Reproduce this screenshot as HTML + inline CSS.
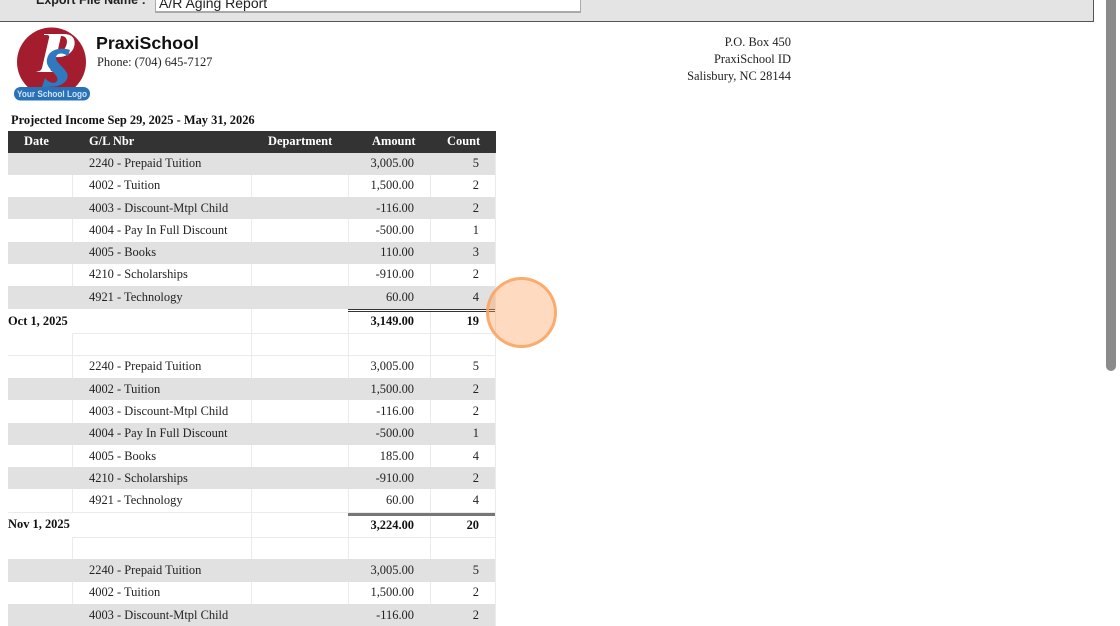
<!DOCTYPE html>
<html><head><meta charset="utf-8">
<style>
html,body{margin:0;padding:0;width:1120px;height:626px;overflow:hidden;background:#fff}
body{position:relative;font-family:"Liberation Serif",serif;font-size:12.45px;color:#222}
div{position:absolute;box-sizing:border-box}
.t{white-space:nowrap;line-height:16px;height:16px}
.g{background:#e1e1e1;left:8px;width:487px}
.v{background:#ebebeb;width:1px}
.h{background:#ebebeb;height:1px}
.r{text-align:right}
.b{font-weight:bold;color:#111}
.c1{left:89px}
.c2{left:300px;width:114px;text-align:right}
.c3{left:430px;width:49px;text-align:right}
</style></head><body>
<!-- top panel -->
<div style="left:-2px;top:-10px;width:1096px;height:32px;background:#e4e4e4;border:1px solid #555"></div>
<div style="left:155px;top:-10px;width:426px;height:23px;background:#fff;border:1px solid #aaa;border-bottom-width:2px"></div>
<div class="t" style="left:36px;top:-8px;font:bold 12.5px/16px 'Liberation Sans',sans-serif;color:#222">Export File Name :</div>
<div class="t" style="left:159px;top:-5px;font:14px/16px 'Liberation Sans',sans-serif;color:#222">A/R Aging Report</div>
<!-- scrollbar -->
<div style="left:1106px;top:-10px;width:10px;height:381px;background:#8a8a8a;border-radius:5px"></div>
<!-- logo -->
<svg style="position:absolute;left:12px;top:26px" width="82" height="76" viewBox="0 0 82 76">
<circle cx="39.500" cy="36" r="34.500" fill="#a31d2e"/>
<path d="M32 8H52C62 8 64 15 62 21C60 28 51 32 44 31L39 42C38 45 39 45 42 46H24C27 45 29 45 30 42L37 12C38 9 36 9 32 9Z" fill="#fff"/>
<path d="M49 10C55 10 56 15 54 20C52 25 49 28 45 28Z" fill="#a31d2e"/>
<path d="M58 24L56 30C50 26 45 27 44 31C43 36 52 41 55 47C58 54 50 60 42 60.500C37 61 33 61 30 61L33 52C36 56 41 58 44 56C47 54 45 50 41 46C36 41 33 37 36 30C39 23 50 21 58 24Z" fill="#2f79bf"/>
<rect x="2" y="61" width="76" height="13.500" rx="6.500" fill="#2a72b8"/>
<text x="40" y="71" text-anchor="middle" textLength="70" lengthAdjust="spacingAndGlyphs" font-family="Liberation Sans,sans-serif" font-weight="bold" font-size="9" fill="#cfe2f7">Your School Logo</text>
</svg>
<div class="t" style="left:96px;top:34px;font:bold 17.800px/18px 'Liberation Sans',sans-serif;color:#111;height:18px">PraxiSchool</div>
<div class="t" style="left:97px;top:54px">Phone: (704) 645-7127</div>
<div class="t r" style="left:591px;width:200px;top:34px">P.O. Box 450</div>
<div class="t r" style="left:591px;width:200px;top:51px">PraxiSchool ID</div>
<div class="t r" style="left:591px;width:200px;top:68px">Salisbury, NC 28144</div>
<div class="t b" style="left:11px;top:112px">Projected Income Sep 29, 2025 - May 31, 2026</div>
<!-- grid lines -->
<div class="v" style="left:72px;top:153px;height:156px"></div>
<div class="v" style="left:251px;top:153px;height:473px"></div>
<div class="v" style="left:348px;top:153px;height:473px"></div>
<div class="v" style="left:430px;top:153px;height:473px"></div>
<div class="v" style="left:495px;top:153px;height:473px"></div>
<div class="v" style="left:72px;top:333px;height:179px"></div>
<div class="v" style="left:72px;top:537px;height:89px"></div>
<div class="h" style="left:72px;top:333px;width:423px"></div>
<div class="h" style="left:8px;top:355px;width:487px"></div>
<div class="h" style="left:8px;top:512px;width:487px"></div>
<div class="h" style="left:72px;top:537px;width:423px"></div>
<!-- gray rows -->
<div class="g" style="top:153px;height:22px"></div>
<div class="g" style="top:197px;height:22px"></div>
<div class="g" style="top:241.500px;height:22px"></div>
<div class="g" style="top:286px;height:22.500px"></div>
<div class="g" style="top:378px;height:22px"></div>
<div class="g" style="top:422.500px;height:22px"></div>
<div class="g" style="top:467px;height:22px"></div>
<div class="g" style="top:559px;height:22.500px"></div>
<div class="g" style="top:604px;height:22px"></div>
<!-- header -->
<div style="left:8px;top:131px;width:487.500px;height:22px;background:#333"></div>
<div class="t b" style="left:24px;top:132.500px;color:#fff">Date</div>
<div class="t b" style="left:89px;top:132.500px;color:#fff">G/L Nbr</div>
<div class="t b" style="left:268px;top:132.500px;color:#fff">Department</div>
<div class="t b" style="left:372px;top:132.500px;color:#fff">Amount</div>
<div class="t b" style="left:447px;top:132.500px;color:#fff">Count</div>
<!-- double lines -->
<div style="left:348px;top:309px;width:147px;height:3px;border-top:1px solid #333;border-bottom:1px solid #333"></div>
<div style="left:348px;top:513px;width:147px;height:3px;background:#777"></div>
<!-- block 1 -->
<div class="t c1" style="top:155px">2240 - Prepaid Tuition</div><div class="t c2" style="top:155px">3,005.00</div><div class="t c3" style="top:155px">5</div>
<div class="t c1" style="top:177px">4002 - Tuition</div><div class="t c2" style="top:177px">1,500.00</div><div class="t c3" style="top:177px">2</div>
<div class="t c1" style="top:199.500px">4003 - Discount-Mtpl Child</div><div class="t c2" style="top:199.500px">-116.00</div><div class="t c3" style="top:199.500px">2</div>
<div class="t c1" style="top:221.500px">4004 - Pay In Full Discount</div><div class="t c2" style="top:221.500px">-500.00</div><div class="t c3" style="top:221.500px">1</div>
<div class="t c1" style="top:244px">4005 - Books</div><div class="t c2" style="top:244px">110.00</div><div class="t c3" style="top:244px">3</div>
<div class="t c1" style="top:266px">4210 - Scholarships</div><div class="t c2" style="top:266px">-910.00</div><div class="t c3" style="top:266px">2</div>
<div class="t c1" style="top:288.500px">4921 - Technology</div><div class="t c2" style="top:288.500px">60.00</div><div class="t c3" style="top:288.500px">4</div>
<div class="t b" style="left:8px;top:313px">Oct 1, 2025</div><div class="t c2 b" style="top:313px">3,149.00</div><div class="t c3 b" style="top:313px">19</div>
<!-- block 2 -->
<div class="t c1" style="top:358px">2240 - Prepaid Tuition</div><div class="t c2" style="top:358px">3,005.00</div><div class="t c3" style="top:358px">5</div>
<div class="t c1" style="top:380.500px">4002 - Tuition</div><div class="t c2" style="top:380.500px">1,500.00</div><div class="t c3" style="top:380.500px">2</div>
<div class="t c1" style="top:403px">4003 - Discount-Mtpl Child</div><div class="t c2" style="top:403px">-116.00</div><div class="t c3" style="top:403px">2</div>
<div class="t c1" style="top:425px">4004 - Pay In Full Discount</div><div class="t c2" style="top:425px">-500.00</div><div class="t c3" style="top:425px">1</div>
<div class="t c1" style="top:447.500px">4005 - Books</div><div class="t c2" style="top:447.500px">185.00</div><div class="t c3" style="top:447.500px">4</div>
<div class="t c1" style="top:470px">4210 - Scholarships</div><div class="t c2" style="top:470px">-910.00</div><div class="t c3" style="top:470px">2</div>
<div class="t c1" style="top:492px">4921 - Technology</div><div class="t c2" style="top:492px">60.00</div><div class="t c3" style="top:492px">4</div>
<div class="t b" style="left:8px;top:516px">Nov 1, 2025</div><div class="t c2 b" style="top:517px">3,224.00</div><div class="t c3 b" style="top:517px">20</div>
<!-- block 3 -->
<div class="t c1" style="top:562px">2240 - Prepaid Tuition</div><div class="t c2" style="top:562px">3,005.00</div><div class="t c3" style="top:562px">5</div>
<div class="t c1" style="top:584px">4002 - Tuition</div><div class="t c2" style="top:584px">1,500.00</div><div class="t c3" style="top:584px">2</div>
<div class="t c1" style="top:607px">4003 - Discount-Mtpl Child</div><div class="t c2" style="top:607px">-116.00</div><div class="t c3" style="top:607px">2</div>
<!-- click highlight -->
<div style="left:486px;top:277px;width:71px;height:71px;border-radius:50%;background:rgba(253,160,90,.38);border:3px solid rgba(250,165,100,.9)"></div>
</body></html>
